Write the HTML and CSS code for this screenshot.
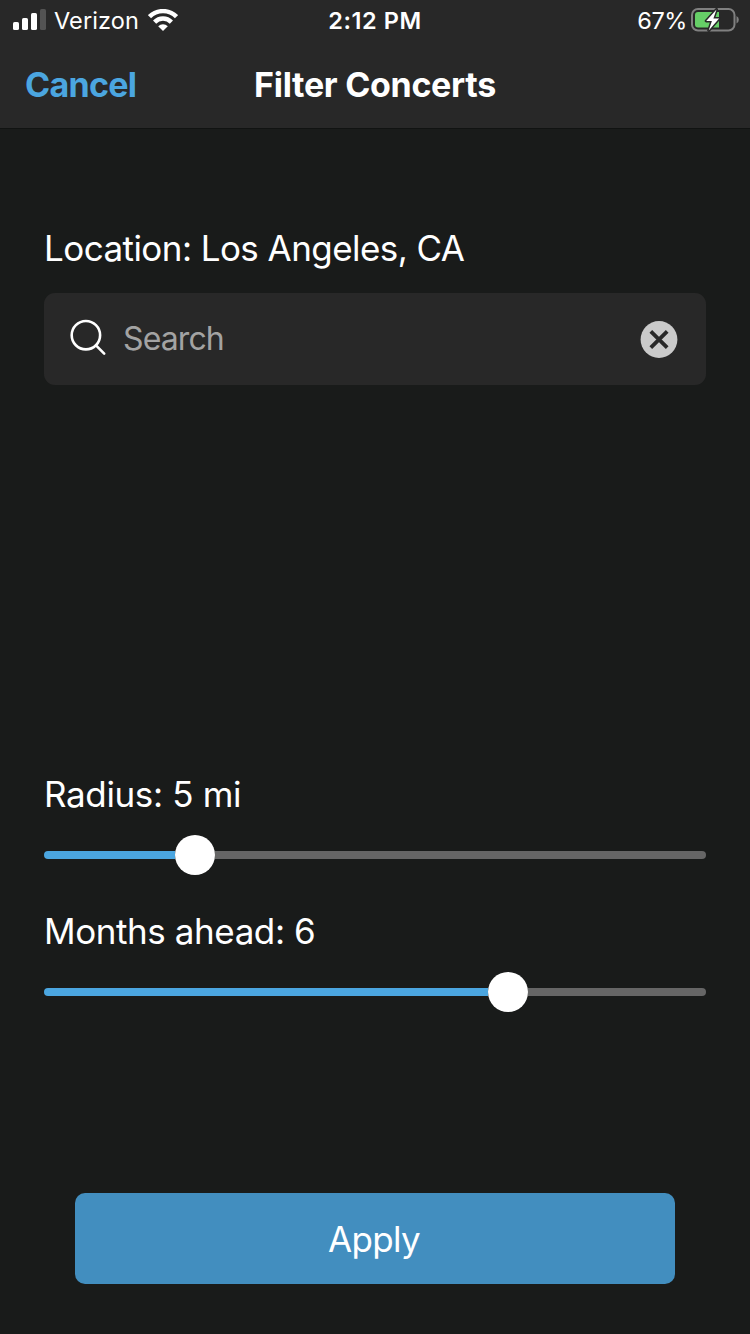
FILE: index.html
```html
<!DOCTYPE html>
<html lang="en">
<head>
<meta charset="utf-8">
<title>Filter Concerts</title>
<link rel="stylesheet" href="styles.css">
</head>
<body>
<div class="screen">
  <header class="header">
    <div class="status">
      <div class="status-left">
        <svg class="signal" width="33" height="22" viewBox="0 0 33 22" fill="#fff"><rect x="0" y="13" width="6" height="8" rx="1.6"/><rect x="9" y="9" width="6" height="12" rx="1.6"/><rect x="18" y="4" width="6" height="17" rx="1.6"/><rect x="27" y="0" width="6" height="21" rx="1.6" fill="#535353"/></svg>
        <span class="carrier">Verizon</span>
        <svg class="wifi" width="30" height="22" viewBox="0 0 30 22"><path d="M1.5 7.7A19 19 0 0 1 28.5 7.7M6.6 13.1A11.7 11.7 0 0 1 23.4 13.1" fill="none" stroke="#fff" stroke-width="4.4"/><path d="M15 22L10.2 17.2A7 7 0 0 1 19.8 17.2Z" fill="#fff"/></svg>
      </div>
      <span class="time">2:12 PM</span>
      <div class="status-right">
        <span class="percent">67%</span>
        <svg class="battery" width="48" height="24" viewBox="0 0 48 24"><rect x="1" y="1" width="42.5" height="21.5" rx="6" fill="none" stroke="#808080" stroke-width="2"/><path d="M45.5 8Q47.8 9 47.8 11.8T45.5 15.6Z" fill="#808080"/><path d="M7 4H28V19.5H7Q4 19.5 4 16.5V7Q4 4 7 4Z" fill="#66cf67"/><path d="M25.5 1.5L15.2 13H20.9L17.7 22.4L28.1 10.6H22.4Z" fill="#fff" stroke="#282828" stroke-width="3" stroke-linejoin="round" paint-order="stroke"/></svg>
      </div>
    </div>
    <nav class="nav">
      <a class="cancel">Cancel</a>
      <h1 class="title">Filter Concerts</h1>
    </nav>
  </header>
  <main class="content">
    <section class="location">
      <div class="label"><span class="location-text">Location: Los Angeles, CA</span></div>
      <div class="search">
        <svg class="search-icon" width="38" height="38" viewBox="0 0 38 38" fill="none" stroke="#fff" stroke-width="2.6" stroke-linecap="round"><circle cx="16.9" cy="17.2" r="14.2"/><path d="M27 27.4L35.2 35.6"/></svg>
        <span class="placeholder">Search</span>
        <svg class="clear" width="38" height="38" viewBox="0 0 38 38"><circle cx="19" cy="18.5" r="18.4" fill="#cacaca"/><path d="M10.8 10.3L27.2 26.7M27.2 10.3L10.8 26.7" stroke="#282828" stroke-width="3.8"/></svg>
      </div>
    </section>
    <section class="sliders">
      <div class="field">
        <div class="label"><span class="radius-text">Radius: 5 mi</span></div>
        <div class="slider"><div class="fill radius-fill"></div><div class="thumb"></div><div class="rest"></div></div>
      </div>
      <div class="field">
        <div class="label"><span class="months-text">Months ahead: 6</span></div>
        <div class="slider"><div class="fill months-fill"></div><div class="thumb"></div><div class="rest"></div></div>
      </div>
    </section>
    <div class="apply"><span class="apply-text">Apply</span></div>
  </main>
</div>
</body>
</html>
```

FILE: styles.css
```css
* { box-sizing: border-box; }
body { margin: 0; background: #191b1a; color: #fff; font-family: Inter, "Liberation Sans", sans-serif; }
span, a, h1 { white-space: nowrap; }
.screen { width: 750px; height: 1334px; display: flex; flex-direction: column; overflow: hidden; }
.header { height: 129px; background: #282828; border-bottom: 1px solid #111312; flex: none; }
.status { height: 40px; display: grid; grid-template-columns: 1fr auto 1fr; align-items: center; padding: 0 11px 0 13px; font-size: 23.5px; line-height: 38px; }
.status span { padding-top: 2px; }
.status-left, .status-right { display: flex; align-items: center; }
.status-right { justify-content: flex-end; gap: 5px; }
.percent { letter-spacing: -0.4px; margin-right: -1px; }
.carrier { margin-left: 8px; letter-spacing: 0.1px; }
.wifi { margin-left: 9px; }
.battery { margin-bottom: 1px; }
.time { font-weight: 600; letter-spacing: 0.6px; margin-left: -2px; }
.nav { height: 88px; display: grid; grid-template-columns: 1fr auto 1fr; align-items: center; padding: 0 25px; }
.cancel { color: #4ba6e0; font-size: 34px; font-weight: 700; letter-spacing: -0.7px; }
.title { margin: 0; font-size: 34px; font-weight: 700; letter-spacing: -0.3px; }
.content { flex: 1; display: flex; flex-direction: column; padding: 96px 44px 50px; }
.label { height: 46px; line-height: 46px; font-size: 35px; font-weight: 400; }
.location-text { letter-spacing: -0.56px; }
.radius-text { letter-spacing: -0.35px; }
.months-text { letter-spacing: -0.42px; }
.search { height: 92px; margin-top: 22px; border-radius: 11px; background: #282828; display: flex; align-items: center; padding: 0 28px 0 25px; font-size: 32px; }
.search-icon { margin-right: 16px; margin-bottom: 4px; }
.placeholder { color: #a3a3a3; flex: 1; letter-spacing: -0.9px; padding-bottom: 2px; }
.clear { margin-top: 1px; }
.sliders { margin-top: 386px; display: flex; flex-direction: column; gap: 34px; }
.field { height: 103px; }
.slider { height: 40px; margin-top: 18px; display: flex; align-items: center; }
.fill { height: 8px; background: #4ba6e0; border-radius: 4px 0 0 4px; }
.radius-fill { width: 131px; }
.months-fill { width: 444px; }
.thumb { width: 40px; height: 40px; border-radius: 50%; background: #fff; }
.rest { flex: 1; height: 8px; background: #666; border-radius: 0 4px 4px 0; }
.apply { height: 91px; margin: auto 31px 0; border-radius: 10px; background: #428ebf; display: flex; align-items: center; justify-content: center; font-size: 35px; letter-spacing: -0.7px; padding-right: 2px; }
```
